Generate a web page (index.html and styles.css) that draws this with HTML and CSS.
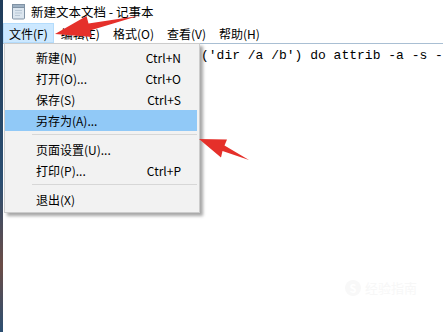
FILE: index.html
```html
<!DOCTYPE html>
<html lang="zh-CN">
<head>
    <meta charset="UTF-8">
    <title>新建文本文档 - 记事本</title>
    <link rel="stylesheet" href="styles.css">
</head>
<body>
<div class="screen">
    <div class="desk"></div>
    <div class="notepad">
        <div class="titlebar">
            <svg class="appicon" width="15" height="17" viewBox="0 0 15 17">
                <rect x="1.5" y="1.5" width="12" height="14.5" rx="1" fill="#dce6ef" stroke="#8193a5"/>
                <rect x="1.5" y="1.5" width="12" height="3" fill="#9fb2c4" stroke="#8193a5"/>
                <path d="M4 7.5h7M4 10h7M4 12.5h5" stroke="#b9c8d6"/>
            </svg>
            <span>新建文本文档 - 记事本</span>
        </div>
        <div class="menubar">
            <span class="menu active">文件(F)</span>
            <span class="menu">编辑(E)</span>
            <span class="menu">格式(O)</span>
            <span class="menu">查看(V)</span>
            <span class="menu">帮助(H)</span>
        </div>
        <div class="editor">
            <pre class="line">('dir /a /b') do attrib -a -s -</pre>
        </div>
    </div>

    <div class="dropdown">
        <div class="item"><span>新建(N)</span><span class="key">Ctrl+N</span></div>
        <div class="item"><span>打开(O)...</span><span class="key">Ctrl+O</span></div>
        <div class="item"><span>保存(S)</span><span class="key">Ctrl+S</span></div>
        <div class="item selected"><span>另存为(A)...</span></div>
        <div class="sep"></div>
        <div class="item"><span>页面设置(U)...</span></div>
        <div class="item"><span>打印(P)...</span><span class="key">Ctrl+P</span></div>
        <div class="sep"></div>
        <div class="item"><span>退出(X)</span></div>
    </div>

    <svg class="arrows" width="443" height="332" viewBox="0 0 443 332">
        <!-- arrow to the file menu -->
        <polygon points="55,34 92,37 90,30.5 138,16 88.5,23.5 86.5,16" fill="#e5302a"/>
        <!-- arrow to save as -->
        <polygon points="199,139 227,139.5 224.5,145.5 249,160 222.5,151 221,157.5" fill="#e5302a"/>
    </svg>

    <div class="watermark"><span class="wm-logo">S</span><span>经验指南</span></div>
</div>
</body>
</html>
```

FILE: styles.css
```css
body {
    margin: 0;
    background: #fff;
    font-family: "Noto Sans CJK SC", "Microsoft YaHei", sans-serif;
    font-size: 12px;
    color: #000;
    overflow: hidden;
}
.screen {
    position: relative;
    display: flex;
    width: 443px;
    height: 332px;
}
.desk {
    width: 3px;
    background: linear-gradient(#1f3c5a, #2c4f72 55%, #6b4c46 80%, #2c4f72);
}
.notepad {
    flex: 1;
    display: flex;
    flex-direction: column;
    min-width: 0;
}
.titlebar {
    height: 22px;
    display: flex;
    align-items: center;
    gap: 5px;
    padding-left: 8px;
    font-size: 12.5px;
}
.appicon {
    display: block;
}
.menubar {
    height: 20px;
    display: flex;
    align-items: stretch;
    padding-top: 1px;
}
.menu {
    display: flex;
    align-items: center;
    padding: 0 6px;
    margin-right: 1px;
}
.menu.active {
    background: #cce8ff;
    box-shadow: inset 0 0 0 1px #b4dcfc;
}
.editor {
    flex: 1;
    border-top: 1px solid #a9bfd3;
    overflow: hidden;
}
.line {
    margin: 0;
    padding: 4px 0 0 198px;
    font-family: "Liberation Mono", monospace;
    font-size: 13px;
    line-height: 16px;
    white-space: pre;
}
.dropdown {
    position: absolute;
    left: 4px;
    top: 43px;
    width: 192px;
    padding: 3px 2px 2px 0;
    background: #f2f2f2;
    border: 1px solid #cccccc;
    box-shadow: 3px 3px 3px rgba(0, 0, 0, 0.35);
}
.item {
    height: 21px;
    display: flex;
    align-items: center;
    justify-content: space-between;
    padding: 0 16px 0 31px;
}
.item.selected {
    background: #91c9f7;
}
.sep {
    height: 8px;
    margin-left: 27px;
    background: linear-gradient(transparent 3px, #d7d7d7 3px, #d7d7d7 4px, transparent 4px);
}
.arrows {
    position: absolute;
    left: 0;
    top: 0;
}
.watermark {
    position: absolute;
    left: 345px;
    top: 278px;
    display: flex;
    align-items: center;
    gap: 4px;
    color: #f7f7f7;
    font-size: 13px;
}
.wm-logo {
    width: 16px;
    height: 16px;
    border-radius: 50%;
    background: #f8f8f8;
    color: #fff;
    font-size: 11px;
    font-weight: bold;
    text-align: center;
    line-height: 16px;
}
```
